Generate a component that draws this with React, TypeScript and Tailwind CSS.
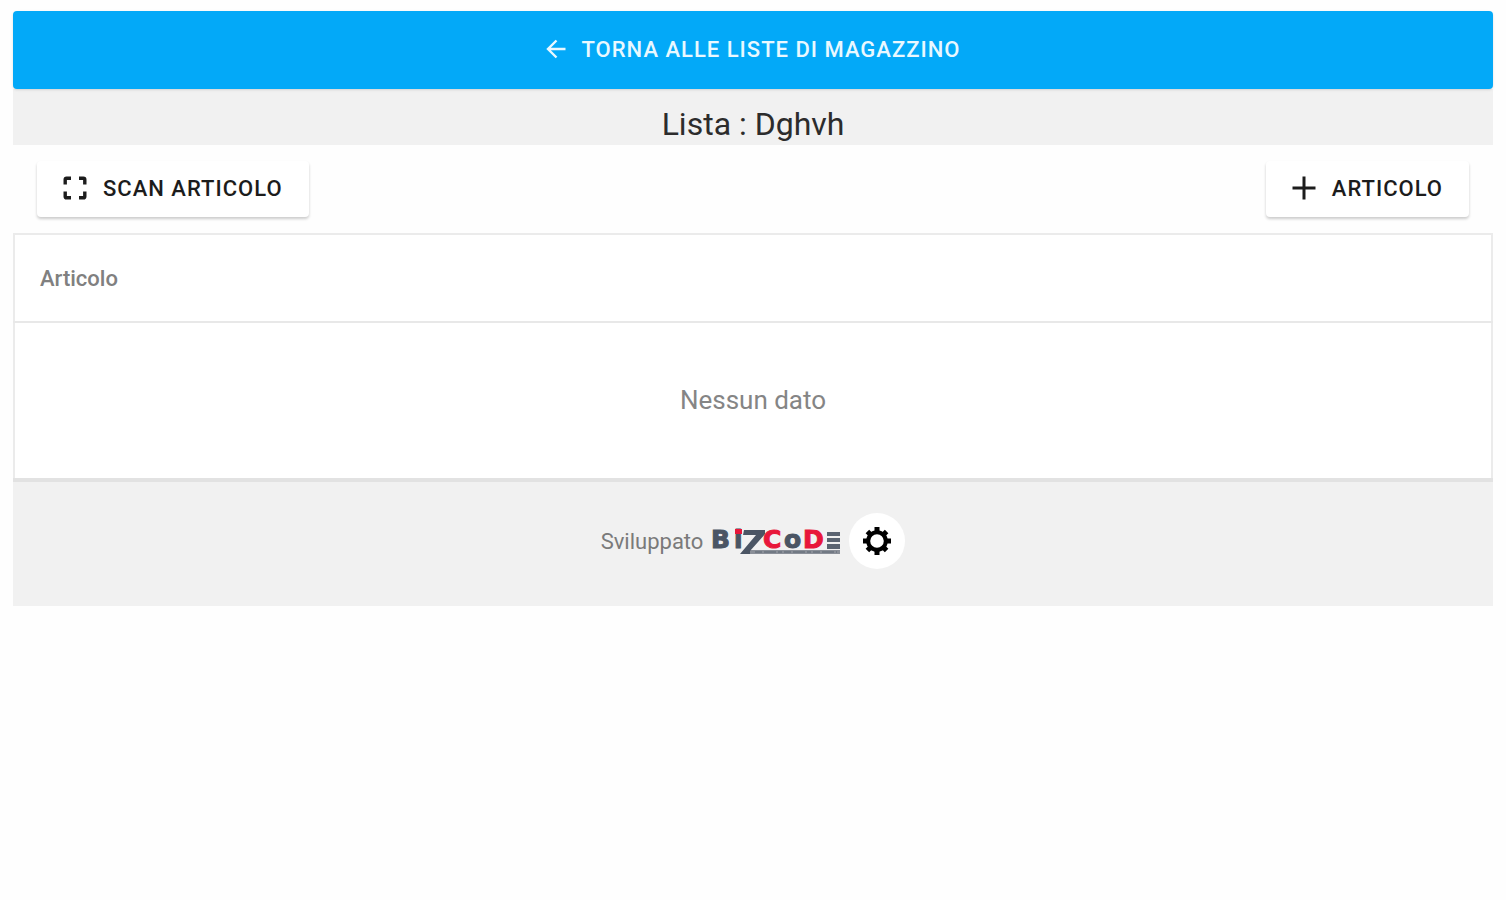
import React from 'react';

const COLUMNS = ['Articolo'];

function BackIcon() {
  return (
    <svg width="20" height="20" viewBox="0 0 20 20" fill="none" stroke="currentColor" strokeWidth="2.4" aria-hidden="true">
      <path d="M19.5 10H2.5M10.5 1.5L2 10l8.5 8.5" />
    </svg>
  );
}

function ScanIcon() {
  return (
    <svg width="24" height="24" viewBox="0 0 24 24" fill="none" stroke="currentColor" strokeWidth="3.4" aria-hidden="true">
      <path d="M2.2 8.6V3.6Q2.2 2.2 3.6 2.2H8M16 2.2h4.4q1.4 0 1.4 1.4v5M21.8 15.4v5q0 1.4-1.4 1.4H16M8 21.8H3.6q-1.4 0-1.4-1.4v-5" />
    </svg>
  );
}

function PlusIcon() {
  return (
    <svg width="24" height="24" viewBox="0 0 24 24" fill="none" stroke="currentColor" strokeWidth="3" aria-hidden="true">
      <path d="M12 .5v23M.5 12h23" />
    </svg>
  );
}

function GearIcon() {
  return (
    <svg width="28" height="28" viewBox="0 0 28 28" fill="none" stroke="currentColor" aria-hidden="true">
      <circle cx="14" cy="14" r="8.8" strokeWidth="4" />
      <path
        strokeWidth="5"
        d="M14 0v5M14 23v5M0 14h5M23 14h5M4.4 4.4l3 3M20.6 20.6l3 3M23.6 4.4l-3 3M7.4 20.6l-3 3"
      />
    </svg>
  );
}

function BizCodeLogo() {
  return (
    <svg
      width="130"
      height="34"
      viewBox="0 0 130 34"
      role="img"
      aria-label="BizCode"
      fontFamily="'DejaVu Sans', 'Liberation Sans', sans-serif"
      fontWeight="700"
      fontSize="25"
    >
      <path d="M40 26H129V30H32L35 26Z" fill="#8a8f98" />
      <path d="M44 28H126" stroke="#5b6471" strokeDasharray="7 2 12 2 4 2" />
      <path d="M33 6H54V10L39 27V30H29L45 11H32Z" fill="#4b5564" />
      <g fill="#4b5564" stroke="#4b5564">
        <text x="0" y="24">B</text>
        <text x="23" y="24">i</text>
        <text x="73" y="24">o</text>
      </g>
      <rect x="24" y="5" width="7" height="5" fill="#e8173a" />
      <g fill="#e8173a" stroke="#e8173a">
        <text x="52" y="24">C</text>
        <text x="92" y="24">D</text>
      </g>
      <path d="M116 8H129V12H116ZM116 14H129V18H116ZM116 20H129V25H116Z" fill="#5b6471" />
    </svg>
  );
}

export default function App() {
  return (
    <div className="min-h-screen bg-[#fefefe] px-[13px] pt-[11px] font-[Roboto,'Liberation_Sans',sans-serif]">
      <button
        type="button"
        className="relative flex h-[78px] w-full items-center justify-center gap-4 rounded bg-[#03a9f8] pb-0.5 text-[22px] font-medium tracking-[1px] text-[#e9f8ff] uppercase shadow-sm"
      >
        <BackIcon />
        Torna alle liste di magazzino
      </button>

      <h1 className="bg-[#f1f1f1] pt-[17px] pb-[3px] text-center text-[32px] leading-9 text-[#2c2c2c]">Lista : Dghvh</h1>

      {/* Toolbar */}
      <div className="flex justify-between px-6 py-4">
        <button
          type="button"
          className="flex h-14 items-center gap-4 rounded bg-white px-[26px] pb-0.5 text-[22px] font-medium tracking-[1px] text-[#1c1c1c] uppercase shadow-[0_2px_3px_rgba(0,0,0,0.2)]"
        >
          <ScanIcon />
          Scan articolo
        </button>
        <button
          type="button"
          className="flex h-14 items-center gap-4 rounded bg-white px-[26px] pb-0.5 text-[22px] font-medium tracking-[1px] text-[#1c1c1c] uppercase shadow-[0_2px_3px_rgba(0,0,0,0.2)]"
        >
          <PlusIcon />
          Articolo
        </button>
      </div>

      <table className="w-full border-collapse border-2 border-b-4 border-[#ebebeb] border-b-[#e2e2e2] bg-white">
        <thead>
          <tr className="h-[88px] border-b-2 border-[#e8e8e8]">
            {COLUMNS.map((column) => (
              <th key={column} scope="col" className="px-[25px] text-left text-[22px] font-medium text-[#808080]">
                {column}
              </th>
            ))}
          </tr>
        </thead>
        <tbody>
          <tr className="h-[158px]">
            <td colSpan={COLUMNS.length} className="text-center text-[26px] text-[#858585]">
              Nessun dato
            </td>
          </tr>
        </tbody>
      </table>

      <footer className="flex h-[124px] items-center justify-center gap-2 bg-[#f1f1f1] pb-1.5 text-[22px] text-[#7a7a7a]">
        <span>Sviluppato</span>
        <BizCodeLogo />
        <button
          type="button"
          aria-label="Impostazioni"
          className="flex size-14 items-center justify-center rounded-full bg-white text-black"
        >
          <GearIcon />
        </button>
      </footer>
    </div>
  );
}
